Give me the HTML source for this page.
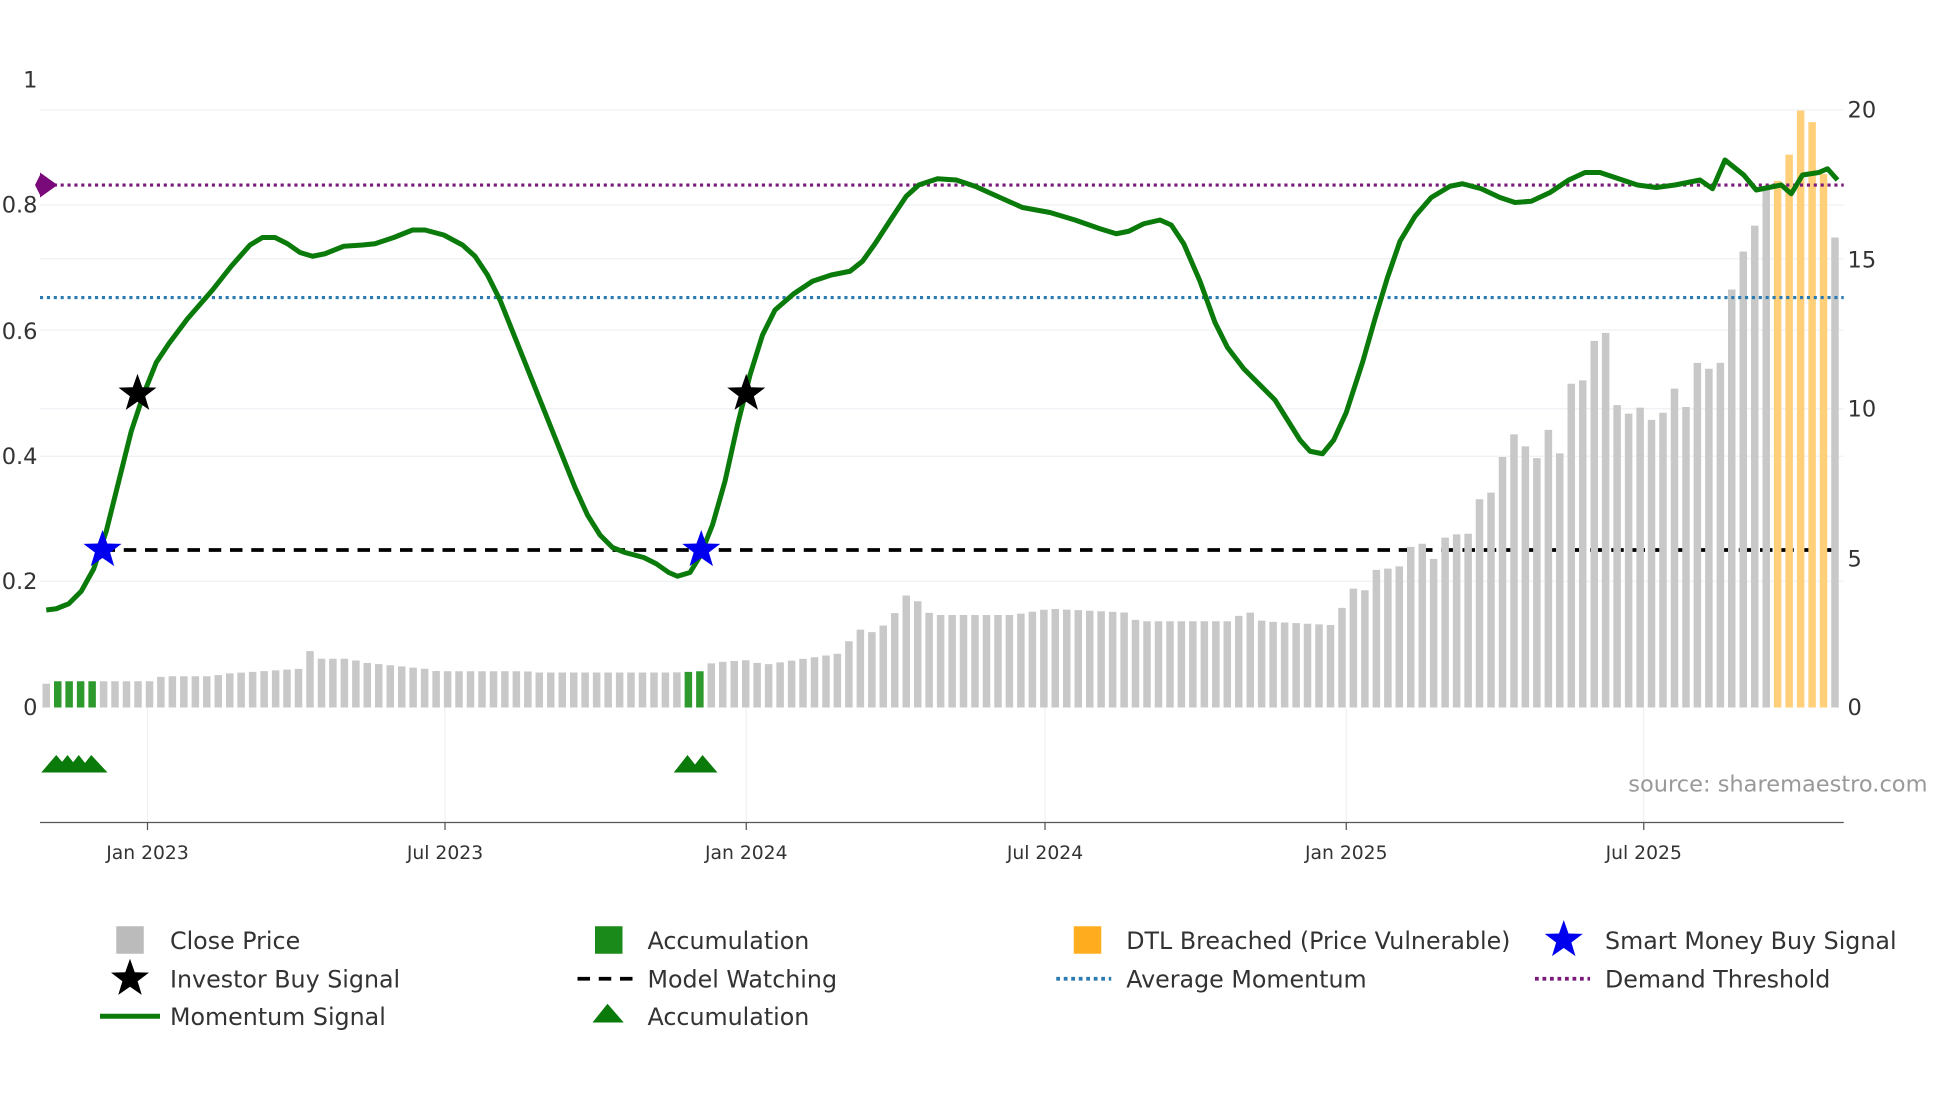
<!DOCTYPE html>
<html><head><meta charset="utf-8"><style>
html,body{margin:0;padding:0;background:#fff;}
svg{display:block;font-family:"DejaVu Sans","Liberation Sans",sans-serif;}
</style></head><body>
<svg id="s" width="1960" height="1102" viewBox="0 0 1568 881.6" xmlns="http://www.w3.org/2000/svg">
<rect width="1568" height="881.6" fill="#fff"/>
<g stroke="#eef0f4" stroke-width="1">
<line x1="32" x2="1475" y1="88" y2="88"/><line x1="32" x2="1475" y1="164" y2="164"/>
<line x1="32" x2="1475" y1="207" y2="207"/><line x1="32" x2="1475" y1="264" y2="264"/>
<line x1="32" x2="1475" y1="327" y2="327"/><line x1="32" x2="1475" y1="365" y2="365"/>
<line x1="32" x2="1475" y1="465" y2="465"/>
<line x1="118" x2="118" y1="566" y2="658"/><line x1="356" x2="356" y1="566" y2="658"/>
<line x1="597" x2="597" y1="566" y2="658"/><line x1="836" x2="836" y1="566" y2="658"/>
<line x1="1077" x2="1077" y1="566" y2="658"/><line x1="1315" x2="1315" y1="566" y2="658"/>
</g>
<line x1="82" x2="1470" y1="440" y2="440" stroke="#000" stroke-width="3" stroke-dasharray="10,7"/>
<g id="bars"></g>
<line x1="32" x2="1475" y1="148" y2="148" stroke="#7a1a7a" stroke-width="2.5" stroke-dasharray="2.5,3"/>
<line x1="32" x2="1475" y1="238" y2="238" stroke="#2b7bb0" stroke-width="2.5" stroke-dasharray="2.5,3"/>
<polygon points="32,138 46,148 32,158" fill="#7a0a7a"/><polygon points="32,140 38,148 32,156 28,148" fill="#7a0a7a"/>
<polyline id="mom" fill="none" stroke="#0a7a0a" stroke-width="4" stroke-linejoin="round"/>
<g id="stars"></g>
<g fill="#0a7a0a">
<polygon points="33,618 45,604 57,618"/><polygon points="43,618 54,604 65,618"/><polygon points="52,618 63,604 74,618"/><polygon points="62,618 73,604 86,618"/>
<polygon points="539,618 550,604 561,618"/><polygon points="551,618 562,604 574,618"/>
</g>
<line x1="32" x2="1475" y1="658" y2="658" stroke="#555" stroke-width="1"/>
<g stroke="#555"><line x1="118" x2="118" y1="658" y2="664"/><line x1="356" x2="356" y1="658" y2="664"/><line x1="597" x2="597" y1="658" y2="664"/><line x1="836" x2="836" y1="658" y2="664"/><line x1="1077" x2="1077" y1="658" y2="664"/><line x1="1315" x2="1315" y1="658" y2="664"/></g>
<g font-size="15" fill="#333" text-anchor="middle">
<text x="118" y="687">Jan 2023</text><text x="356" y="687">Jul 2023</text><text x="597" y="687">Jan 2024</text><text x="836" y="687">Jul 2024</text><text x="1077" y="687">Jan 2025</text><text x="1315" y="687">Jul 2025</text>
</g>
<g font-size="18" fill="#333" text-anchor="end">
<text x="30" y="70">1</text><text x="30" y="170">0.8</text><text x="30" y="271">0.6</text><text x="30" y="371">0.4</text><text x="30" y="471">0.2</text><text x="30" y="572">0</text>
</g>
<g font-size="18" fill="#333">
<text x="1478" y="94">20</text><text x="1478" y="214">15</text><text x="1478" y="333">10</text><text x="1478" y="453">5</text><text x="1478" y="572">0</text>
</g>
<text x="1542" y="633" font-size="18" fill="#999" text-anchor="end">source: sharemaestro.com</text>
<g font-size="19" fill="#333">
<rect x="93" y="741" width="22" height="22" fill="#bbb"/><text x="136" y="759">Close Price</text>
<rect x="476" y="741" width="22" height="22" fill="#1a8a1a"/><text x="518" y="759">Accumulation</text>
<rect x="859" y="741" width="22" height="22" fill="#ffad1f"/><text x="901" y="759">DTL Breached (Price Vulnerable)</text>
<text x="1284" y="759">Smart Money Buy Signal</text>
<text x="136" y="790">Investor Buy Signal</text>
<line x1="462" x2="506" y1="783" y2="783" stroke="#000" stroke-width="3" stroke-dasharray="10,7"/><text x="518" y="790">Model Watching</text>
<line x1="845" x2="889" y1="783" y2="783" stroke="#2b7bb0" stroke-width="3" stroke-dasharray="3,3"/><text x="901" y="790">Average Momentum</text>
<line x1="1228" x2="1272" y1="783" y2="783" stroke="#7a1a7a" stroke-width="3" stroke-dasharray="3,3"/><text x="1284" y="790">Demand Threshold</text>
<line x1="80" x2="128" y1="813" y2="813" stroke="#0a7a0a" stroke-width="4"/><text x="136" y="820">Momentum Signal</text>
<polygon points="474,818 486,803 499,818" fill="#0a7a0a"/><text x="518" y="820">Accumulation</text>
</g>
<g id="lstars"></g>
</svg>
<script>
function star(cx,cy,r,fill){var p=[];for(var i=0;i<10;i++){var a=-Math.PI/2+i*Math.PI/5,rr=i%2?r*0.4:r;p.push((cx+rr*Math.cos(a)).toFixed(1)+','+(cy+rr*Math.sin(a)).toFixed(1));}return '<polygon points="'+p.join(' ')+'" fill="'+fill+'"/>';}
document.getElementById('stars').innerHTML=star(110,315,16,'#000')+star(597,315,16,'#000')+star(82,440,16,'#0000ee')+star(561,440,16,'#0000ee');
document.getElementById('lstars').innerHTML=star(104,783,16,'#000')+star(1251,752,16,'#0000ee');
var k=[[37,547],[45,545],[75,545],[120,545],[130,541],[170,541],[180,539],[240,535],[247,520],[255,527],[280,527],[290,530],[340,535],[350,537],[420,537],[430,538],[540,538],[560,537],[570,530],[600,528],[610,532],[670,523],[680,512],[690,502],[700,507],[710,497],[718,488],[727,473],[735,482],[745,492],[800,492],[810,492],[840,487],[860,488],[900,490],[910,497],[990,497],[993,484],[1000,490],[1010,497],[1065,500],[1075,484],[1085,467],[1093,473],[1102,454],[1110,455],[1120,453],[1130,435],[1140,435],[1148,449],[1157,428],[1175,427],[1185,395],[1194,394],[1203,362],[1212,346],[1221,358],[1230,367],[1239,343],[1248,363],[1257,307],[1266,305],[1275,273],[1285,266],[1294,326],[1303,331],[1312,326],[1321,336],[1330,331],[1340,310],[1349,326],[1358,290],[1367,295],[1376,292],[1386,228],[1395,200],[1404,180],[1413,150],[1422,145],[1431,125],[1440,88],[1450,98],[1459,140],[1468,190]];
function interp(x){for(var i=0;i<k.length-1;i++){if(x<=k[i+1][0]){var t=(x-k[i][0])/(k[i+1][0]-k[i][0]);return k[i][1]+t*(k[i+1][1]-k[i][1]);}}return k[k.length-1][1];}
var h='';var n=157;for(var i=0;i<n;i++){var x=37+i*(1431/(n-1));var y=interp(x);var c='#c8c8c8';
if((x>41&&x<78)||(x>546&&x<566))c='#2e9a2e';if(x>1419&&x<1462)c='#ffcf7a';
h+='<rect x="'+(x-3).toFixed(1)+'" y="'+y.toFixed(1)+'" width="6" height="'+(566-y).toFixed(1)+'" fill="'+c+'"/>';}
document.getElementById('bars').innerHTML=h;
document.getElementById('mom').setAttribute('points',"37,488 45,487 55,483 65,473 75,455 85,425 95,385 105,345 115,315 125,290 135,275 150,255 170,232 185,213 200,196 210,190 220,190 230,195 240,202 250,205 260,203 275,197 290,196 300,195 315,190 330,184 340,184 355,188 370,196 380,205 390,220 400,240 420,290 440,340 460,390 470,412 480,428 490,438 500,442 515,446 525,451 535,458 542,461 552,458 560,445 570,420 580,385 590,340 600,300 610,268 620,248 635,235 650,225 665,220 680,217 690,209 700,195 715,172 725,157 735,148 750,143 765,144 780,149 800,158 818,166 840,170 860,176 880,183 893,187 903,185 915,179 928,176 937,180 947,195 960,225 972,258 982,278 995,295 1010,310 1020,320 1030,336 1040,352 1048,361 1058,363 1067,352 1077,330 1090,290 1100,255 1110,222 1120,193 1132,173 1145,158 1160,149 1170,147 1185,151 1200,158 1212,162 1225,161 1240,154 1255,144 1268,138 1280,138 1295,143 1310,148 1325,150 1340,148 1360,144 1370,151 1380,128 1395,140 1405,152 1415,150 1425,148 1433,155 1442,140 1455,138 1462,135 1470,144");
</script>
</body></html>
